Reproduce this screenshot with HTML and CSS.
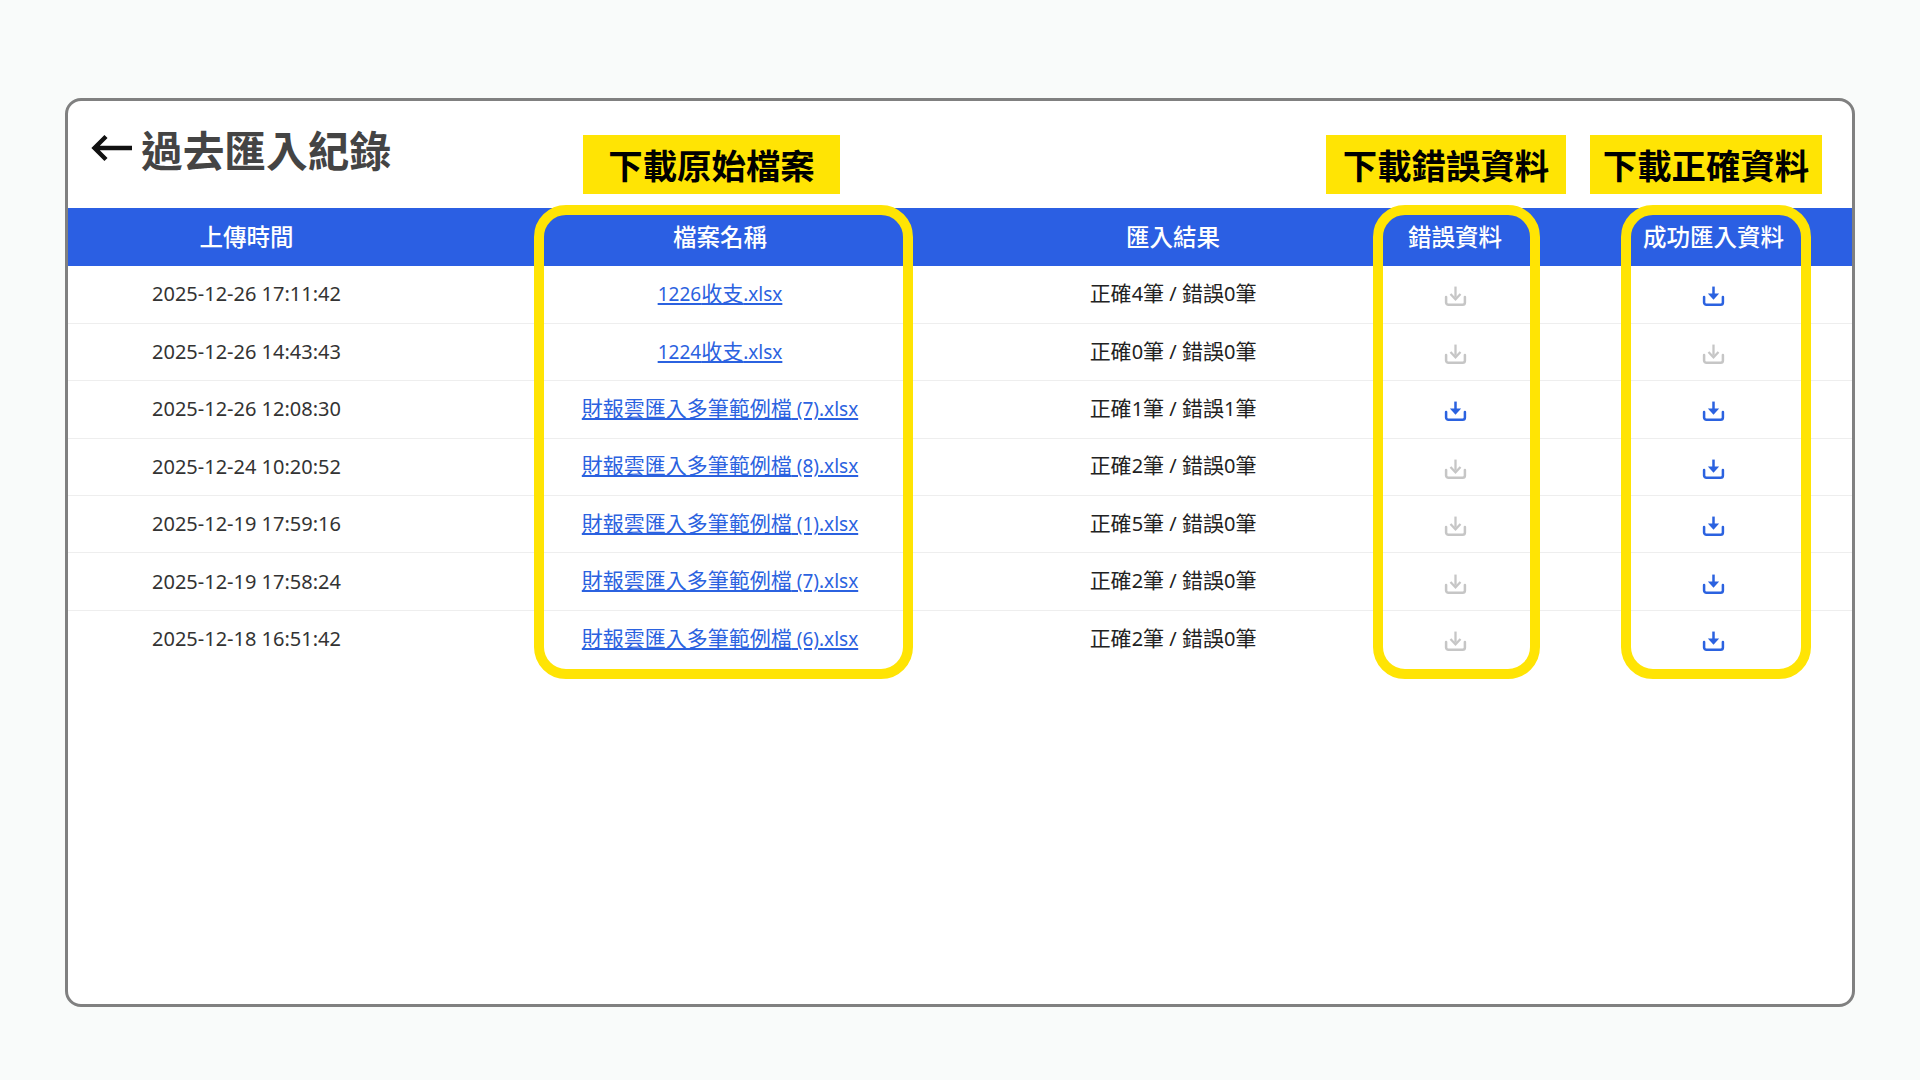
FILE: index.html
```html
<!DOCTYPE html>
<html lang="zh-Hant">
<head>
<meta charset="utf-8">
<title>過去匯入紀錄</title>
<link rel="stylesheet" href="styles.css">
</head>
<body>
<svg class="sprite" width="0" height="0" aria-hidden="true">
  <symbol id="dl" viewBox="0 0 22 22">
    <path d="M11 1.500v10.500" fill="none" stroke="currentColor" stroke-width="2.4"/>
    <path d="M5.600 8.200h10.800L11 14.200z" fill="currentColor"/>
    <path d="M2 11.500v5.300a2.200 2.200 0 0 0 2.200 2.200h13.600a2.200 2.200 0 0 0 2.200-2.200v-5.300" fill="none" stroke="currentColor" stroke-width="2.400" stroke-linecap="round"/>
  </symbol>
  <symbol id="dl-off" viewBox="0 0 22 22">
    <path d="M11 1.500v10.500" fill="none" stroke="currentColor" stroke-width="2.200"/>
    <path d="M6.200 8.600L11 13.600l4.800-5" fill="none" stroke="currentColor" stroke-width="2.200"/>
    <path d="M2 11.500v5.300a2.200 2.200 0 0 0 2.200 2.200h13.600a2.200 2.200 0 0 0 2.200-2.200v-5.300" fill="none" stroke="currentColor" stroke-width="2.400" stroke-linecap="round"/>
  </symbol>
</svg>
<main class="page">
  <section class="card">
    <header class="title-row">
      <svg class="back" viewBox="0 0 42 28" aria-hidden="true"><path d="M41 14H4M15 2.500L3.500 14 15 25.500" fill="none" stroke="#111" stroke-width="4.400"/></svg>
      <h1 class="title">過去匯入紀錄</h1>
    </header>
    <table class="records">
      <colgroup>
        <col class="c1"><col class="c2"><col class="c3"><col class="c4"><col class="c5">
      </colgroup>
      <thead>
        <tr><th>上傳時間</th><th>檔案名稱</th><th>匯入結果</th><th>錯誤資料</th><th>成功匯入資料</th></tr>
      </thead>
      <tbody>
        <tr><td class="date">2025-12-26 17:11:42</td><td><a href="#"><span class="lat">1226</span>收支<span class="lat">.xlsx</span></a></td><td>正確<span class="num">4</span>筆<span class="num"> / </span>錯誤<span class="num">0</span>筆</td><td><svg class="ico off"><use href="#dl-off"/></svg></td><td><svg class="ico on"><use href="#dl"/></svg></td></tr>
        <tr><td class="date">2025-12-26 14:43:43</td><td><a href="#"><span class="lat">1224</span>收支<span class="lat">.xlsx</span></a></td><td>正確<span class="num">0</span>筆<span class="num"> / </span>錯誤<span class="num">0</span>筆</td><td><svg class="ico off"><use href="#dl-off"/></svg></td><td><svg class="ico off"><use href="#dl-off"/></svg></td></tr>
        <tr><td class="date">2025-12-26 12:08:30</td><td><a href="#">財報雲匯入多筆範例檔<span class="lat"> (7).xlsx</span></a></td><td>正確<span class="num">1</span>筆<span class="num"> / </span>錯誤<span class="num">1</span>筆</td><td><svg class="ico on"><use href="#dl"/></svg></td><td><svg class="ico on"><use href="#dl"/></svg></td></tr>
        <tr><td class="date">2025-12-24 10:20:52</td><td><a href="#">財報雲匯入多筆範例檔<span class="lat"> (8).xlsx</span></a></td><td>正確<span class="num">2</span>筆<span class="num"> / </span>錯誤<span class="num">0</span>筆</td><td><svg class="ico off"><use href="#dl-off"/></svg></td><td><svg class="ico on"><use href="#dl"/></svg></td></tr>
        <tr><td class="date">2025-12-19 17:59:16</td><td><a href="#">財報雲匯入多筆範例檔<span class="lat"> (1).xlsx</span></a></td><td>正確<span class="num">5</span>筆<span class="num"> / </span>錯誤<span class="num">0</span>筆</td><td><svg class="ico off"><use href="#dl-off"/></svg></td><td><svg class="ico on"><use href="#dl"/></svg></td></tr>
        <tr><td class="date">2025-12-19 17:58:24</td><td><a href="#">財報雲匯入多筆範例檔<span class="lat"> (7).xlsx</span></a></td><td>正確<span class="num">2</span>筆<span class="num"> / </span>錯誤<span class="num">0</span>筆</td><td><svg class="ico off"><use href="#dl-off"/></svg></td><td><svg class="ico on"><use href="#dl"/></svg></td></tr>
        <tr><td class="date">2025-12-18 16:51:42</td><td><a href="#">財報雲匯入多筆範例檔<span class="lat"> (6).xlsx</span></a></td><td>正確<span class="num">2</span>筆<span class="num"> / </span>錯誤<span class="num">0</span>筆</td><td><svg class="ico off"><use href="#dl-off"/></svg></td><td><svg class="ico on"><use href="#dl"/></svg></td></tr>
      </tbody>
    </table>
  </section>
  <div class="tag tag-file">下載原始檔案</div>
  <div class="tag tag-err">下載錯誤資料</div>
  <div class="tag tag-ok">下載正確資料</div>
  <div class="ring ring-file"></div>
  <div class="ring ring-err"></div>
  <div class="ring ring-ok"></div>
</main>
</body>
</html>
```
FILE: styles.css
```css
* { box-sizing: border-box; }
html, body { margin: 0; height: 100%; }
body {
  background: #f9fbfa;
  font-family: "Noto Sans", "Noto Sans CJK TC", sans-serif;
  color: #222;
  overflow: hidden;
}
.sprite { position: absolute; }
.page {
  position: relative;
  width: 1920px;
  height: 1080px;
  padding: 98px 65px 73px 65px;
}
.card {
  height: 100%;
  background: #fff;
  border: 3px solid #808080;
  border-radius: 16px;
  overflow: hidden;
}
.title-row {
  height: 107px;
  display: flex;
  align-items: center;
  gap: 8px;
  padding: 0 0 11px 23px;
}
.back { width: 42px; height: 28px; flex: none; margin-top: -3px; }
.title {
  margin: 0;
  font-family: "Noto Sans CJK TC", sans-serif;
  font-size: 41.700px;
  font-weight: 700;
  line-height: 1.2;
  color: #444;
}
.records {
  width: 100%;
  border-collapse: collapse;
  table-layout: fixed;
}
.c1 { width: 357px; }
.c2 { width: 590px; }
.c3 { width: 316px; }
.c4 { width: 248px; }
.records th {
  height: 58px;
  padding: 0 0 2px;
  background: #2b5fe3;
  color: #fff;
  font-family: "Noto Sans CJK TC", sans-serif;
  font-size: 23.500px;
  font-weight: 500;
  text-align: center;
}
.records td {
  height: 57.400px;
  padding: 0 0 5px;
  text-align: center;
  vertical-align: middle;
  font-size: 21px;
  color: #222;
  border-bottom: 1px solid #eee;
}
.records th:last-child,
.records td:last-child { padding-right: 4px; }
.records tbody tr:last-child td { border-bottom: 0; }
.records td.date { font-size: 20px; color: #333; padding-bottom: 1px; }
.lat { font-size: 19px; }
.num { font-size: 20px; }
.records a { color: #2b62e0; text-decoration: underline; }
.ico { display: block; width: 23px; height: 23px; margin: 10px auto 0; }
.on { color: #2b62e0; }
.off { color: #c6c6c6; }
.tag {
  position: absolute;
  top: 135px;
  height: 59px;
  padding-bottom: 2px;
  background: #ffe404;
  color: #000;
  font-family: "Noto Sans CJK TC", sans-serif;
  font-size: 34.400px;
  font-weight: 700;
  display: flex;
  align-items: center;
  justify-content: center;
}
.tag-file { left: 583px; width: 257px; }
.tag-err { left: 1326px; width: 240px; }
.tag-ok { left: 1590px; width: 232px; }
.ring {
  position: absolute;
  top: 205px;
  height: 474px;
  border: 10px solid #ffe404;
  border-radius: 32px;
}
.ring-file { left: 534px; width: 379px; }
.ring-err { left: 1373px; width: 167px; }
.ring-ok { left: 1621px; width: 190px; }
```
